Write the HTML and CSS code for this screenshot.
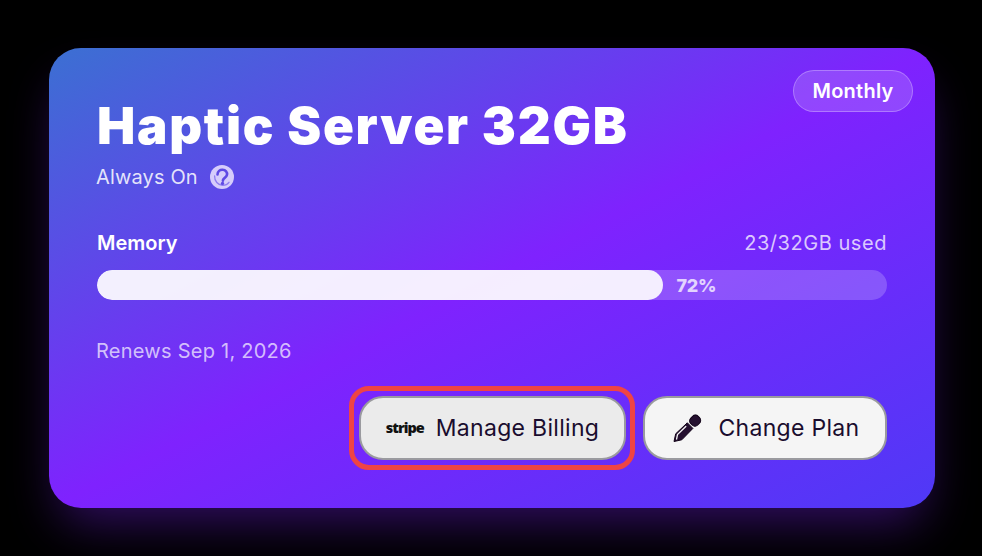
FILE: index.html
```html
<!DOCTYPE html>
<html lang="en">
<head>
<meta charset="utf-8">
<title>Haptic Server 32GB</title>
<link rel="stylesheet" href="styles.css">
</head>
<body>
<section class="card">
  <span class="pill">Monthly</span>
  <h1 class="title">Haptic Server 32GB</h1>
  <div class="sub">
    <span>Always On</span>
    <svg class="help" viewBox="0 0 24 24" aria-hidden="true">
      <circle cx="12" cy="12" r="12" fill="#d6ccfb"/>
      <path d="M7.500 9.500C7.500 6.300 10 4.600 12.600 4.800c3 .2 4.800 2.400 4.400 5-.3 2-2 3-3.200 3.900-.6.5-.9 1-.9 2" fill="none" stroke="#5f49e4" stroke-width="2.600" stroke-linecap="round"/>
      <path d="M4.600 11c-.2 5.200 3.400 9 7.900 9.300 2.800.1 5-1 6.500-3" fill="none" stroke="#8f7cf0" stroke-width="1.300" stroke-linecap="round"/>
      <circle cx="12.500" cy="18.400" r="1.700" fill="#5f49e4"/>
    </svg>
  </div>
  <div class="meter-head">
    <span class="meter-label">Memory</span>
    <span class="meter-used">23/32GB used</span>
  </div>
  <div class="bar">
    <div class="fill" style="width:71.7%"></div>
    <span class="pct">72%</span>
  </div>
  <p class="renews">Renews Sep 1, 2026</p>
  <div class="actions">
    <button class="btn btn-billing" type="button">
      <span class="stripe">stripe</span>
      <span>Manage Billing</span>
    </button>
    <button class="btn btn-plan" type="button">
      <svg class="pencil" viewBox="0 0 30 30" aria-hidden="true">
        <path d="M2 28.500 3.700 20.800 15.300 9.800l5.600 5.600L9.800 26.800z" fill="#24102f" stroke="#120318" stroke-width="1" stroke-linejoin="round"/>
        <path d="M4.600 26 5.500 21.500 13.800 13.500" fill="none" stroke="#f5f5f5" stroke-width="1.300" stroke-linecap="round"/>
        <rect x="18.300" y="2.400" width="9.800" height="10.500" rx="4" transform="rotate(45 23.200 7.600)" fill="#24102f" stroke="#120318" stroke-width="1"/>
      </svg>
      <span>Change Plan</span>
    </button>
  </div>
</section>
</body>
</html>
```
FILE: styles.css
```css
* { box-sizing: border-box; }
html, body { margin: 0; height: 100%; background: #000; overflow: hidden; }
body { padding: 48px 47px 48px 49px; font-family: Inter, "Liberation Sans", sans-serif; }

.card {
  position: relative;
  height: 460px;
  padding: 48px;
  border-radius: 32px;
  color: #fff;
  background: linear-gradient(to bottom right, #3b70d2 0%, #7f22fe 50%, #4f39f6 100%);
  box-shadow: 0 25px 50px -12px rgba(127, 34, 254, .4);
}

.pill {
  position: absolute;
  top: 22px;
  right: 22px;
  width: 120px;
  height: 42px;
  display: flex;
  align-items: center;
  justify-content: center;
  border: 1.500px solid rgba(255, 255, 255, .28);
  border-radius: 21px;
  background: rgba(255, 255, 255, .16);
  font-size: 20px;
  font-weight: 600;
  letter-spacing: .25px;
}

.title {
  margin: 0;
  font-size: 51px;
  line-height: 60px;
  font-weight: 900;
  letter-spacing: 1.750px;
}

.sub {
  display: flex;
  align-items: center;
  gap: 12px;
  margin: 5px 0 0 -1px;
  height: 32px;
  font-size: 20px;
  letter-spacing: .15px;
  color: rgba(255, 255, 255, .85);
}
.help { width: 24px; height: 24px; flex: none; }

.meter-head {
  display: flex;
  justify-content: space-between;
  align-items: center;
  margin-top: 35px;
  height: 30px;
  font-size: 20px;
}
.meter-label { font-weight: 600; }
.meter-used { color: rgba(255, 255, 255, .75); letter-spacing: .55px; }

.bar {
  position: relative;
  display: flex;
  align-items: center;
  height: 30px;
  margin-top: 12px;
  border-radius: 15px;
  background: rgba(255, 255, 255, .2);
  overflow: hidden;
}
.fill {
  height: 100%;
  border-radius: 15px;
  background: rgba(255, 255, 255, .9);
}
.pct {
  margin-left: 13px;
  font-size: 18px;
  font-weight: 800;
  letter-spacing: -.2px;
  color: rgba(255, 255, 255, .75);
}

.renews {
  margin: 36px 0 0 -1px;
  height: 30px;
  line-height: 30px;
  font-size: 20px;
  letter-spacing: .25px;
  color: rgba(255, 255, 255, .7);
}

.actions {
  display: flex;
  justify-content: flex-end;
  gap: 17px;
  margin-top: 30px;
}
.btn {
  position: relative;
  display: flex;
  align-items: center;
  justify-content: center;
  height: 64px;
  padding: 0;
  border: 2px solid #9a9a9f;
  border-radius: 24px;
  font: 400 23px/1 Inter, "Liberation Sans", sans-serif;
  letter-spacing: .3px;
  color: #1a0d2e;
}
.btn-billing {
  width: 267px;
  gap: 12px;
  background: #ebebeb;
}
.btn-billing::after {
  content: "";
  position: absolute;
  inset: -12px -11px -12px -12px;
  border: 5.500px solid #ef4444;
  border-radius: 20px;
  pointer-events: none;
}
.btn-plan {
  width: 244px;
  gap: 17px;
  padding-left: 1px;
  background: #f5f5f5;
}
.stripe {
  font: 800 14.500px/1 "Open Sans", "Liberation Sans", sans-serif;
  letter-spacing: -1px;
  color: #111;
}
.pencil { width: 30px; height: 30px; flex: none; }
```
